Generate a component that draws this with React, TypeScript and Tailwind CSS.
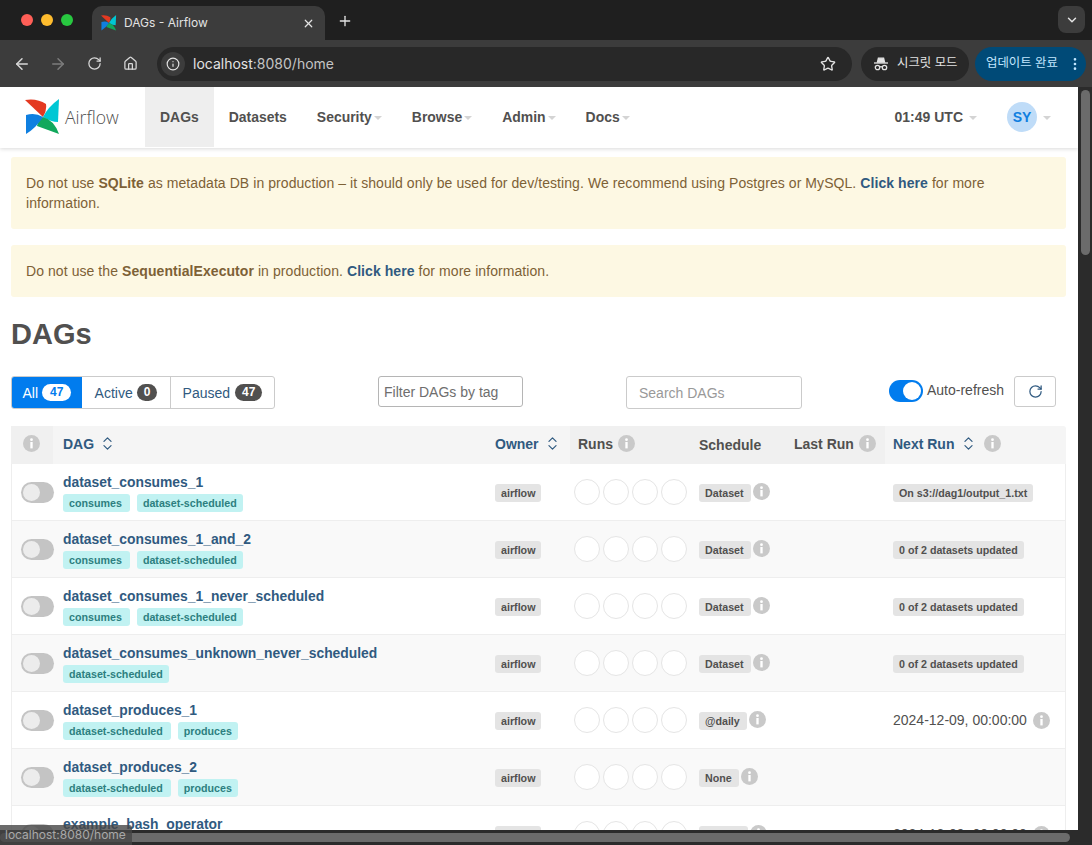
import { ArrowLeft, ArrowRight, ChevronDown, ChevronsUpDown, EllipsisVertical, Home, Info, Plus, RotateCw, Star, X } from "lucide-react";

const columns = "grid grid-cols-[42px_432px_85px_120px_95px_100px_1fr]";

const rows = [
  { name: "dataset_consumes_1", tags: ["consumes", "dataset-scheduled"], schedule: "Dataset", next: "On s3://dag1/output_1.txt" },
  { name: "dataset_consumes_1_and_2", tags: ["consumes", "dataset-scheduled"], schedule: "Dataset", next: "0 of 2 datasets updated" },
  { name: "dataset_consumes_1_never_scheduled", tags: ["consumes", "dataset-scheduled"], schedule: "Dataset", next: "0 of 2 datasets updated" },
  { name: "dataset_consumes_unknown_never_scheduled", tags: ["dataset-scheduled"], schedule: "Dataset", next: "0 of 2 datasets updated" },
  { name: "dataset_produces_1", tags: ["dataset-scheduled", "produces"], schedule: "@daily", date: "2024-12-09, 00:00:00" },
  { name: "dataset_produces_2", tags: ["dataset-scheduled", "produces"], schedule: "None" },
  { name: "example_bash_operator", tags: [], schedule: "0 0 * * *", date: "2024-12-09, 00:00:00" },
];

function Pinwheel({ className }: { className: string }) {
  return (
    <svg viewBox="0 0 36 36" className={className}>
      <path d="M0 1 Q12 -1 21 5 Q22 12 18 18 Z" fill="#e43921" />
      <path d="M34 0 L33 23 Q26 23 18 18 Q23 8 34 0 Z" fill="#00c7d4" />
      <path d="M34 35 L12 27 Q13 21 18 18 Q29 21 34 35 Z" fill="#11a85c" />
      <path d="M1 35 L1 16 Q10 13 18 18 Q11 29 1 35 Z" fill="#0f7fe0" />
    </svg>
  );
}

function InfoDot({ className = "" }: { className?: string }) {
  return (
    <svg viewBox="0 0 16 16" className={`h-[17px] w-[17px] shrink-0 ${className}`}>
      <circle cx="8" cy="8" r="8" fill="#c9c9c9" />
      <circle cx="8" cy="4.4" r="1.3" fill="#fff" />
      <rect x="6.9" y="6.6" width="2.2" height="6" fill="#fff" />
    </svg>
  );
}

function Caret({ className = "" }: { className?: string }) {
  return <span className={`inline-block h-0 w-0 border-x-[4px] border-t-[4px] border-x-transparent border-t-[#d4d4d4] ${className}`} />;
}

function Incognito() {
  return (
    <svg viewBox="0 0 16 16" className="h-[16px] w-[16px]" fill="none" stroke="#e3e3e3" strokeWidth="1.3">
      <path d="M4.5 6 L5.4 2.2 H10.6 L11.5 6 Z" fill="#e3e3e3" />
      <path d="M1 7 H15" />
      <circle cx="4.5" cy="11.5" r="2.2" />
      <circle cx="11.5" cy="11.5" r="2.2" />
      <path d="M6.7 11 Q8 10.2 9.3 11" />
    </svg>
  );
}

function NavItem({ label, caret, active }: { label: string; caret?: boolean; active?: boolean }) {
  return (
    <div className={`flex h-[60px] items-center px-[15px] text-[13.95px] font-bold text-[#51504f] ${active ? "bg-[#eeeeee]" : ""}`}>
      {label}
      {caret && <Caret className="ml-[2px] mt-[2px]" />}
    </div>
  );
}

function Badge({ text, className = "" }: { text: string; className?: string }) {
  return <span className={`inline-block h-[18px] rounded-[3px] bg-[#e4e4e4] pl-[6px] text-[10.7px] font-bold leading-[18px] text-[#51504f] ${className}`}>{text}</span>;
}

function DagRow({ row, index }: { row: (typeof rows)[number]; index: number }) {
  return (
    <div className={`${columns} h-[57px] border-b border-x border-[#eeeeee] ${index % 2 === 1 ? "bg-[#f9f9f9]" : "bg-white"}`}>
      <div className="flex items-center pl-[9px]">
        <div className="flex h-[21px] w-[35px] items-center rounded-full bg-[#c4c4c4] pl-[2px]">
          <div className="h-[17px] w-[17px] rounded-full bg-[#ececec]" />
        </div>
      </div>
      <div className="pl-[9px] pt-[10px]">
        <div className="text-[13.87px] font-bold leading-[17px] text-[#305a80]">{row.name}</div>
        <div className="mt-[3px] flex gap-[6.5px]">
          {row.tags.map((tag, i) => (
            <span key={tag} className={`h-[18px] rounded-[3px] bg-[#c1f2f2] pl-[6px] text-[10.7px] font-bold leading-[18px] text-[#2d7f80] ${i < row.tags.length - 1 ? "pr-[8.5px]" : "pr-[6px]"}`}>
              {tag}
            </span>
          ))}
        </div>
      </div>
      <div className="flex items-center pl-[9px] pt-[2px]">
        <Badge text="airflow" className="pr-[6px]" />
      </div>
      <div className="flex items-center gap-[3px] pl-[3px]">
        {[0, 1, 2, 3].map((i) => (
          <div key={i} className="h-[26px] w-[26px] rounded-full border border-[#e5e5e5] bg-white" />
        ))}
      </div>
      <div className="flex items-center pl-[8px] pt-[2px]">
        <Badge text={row.schedule} className="pr-[7px]" />
        <InfoDot className="-mt-[3px] ml-[2px]" />
      </div>
      <div />
      <div className="flex items-center pl-[7px] pt-[2px]">
        {row.next && <Badge text={row.next} className="pr-[6px]" />}
        {row.date && (
          <>
            <span className="-mt-[2px] text-[14px] text-[#51504f]">{row.date}</span>
            <InfoDot className="-mt-[2px] ml-[6px]" />
          </>
        )}
      </div>
    </div>
  );
}

function BrowserBar() {
  return (
    <div className="shrink-0 font-['Inter','Noto_Sans_CJK_KR',sans-serif] text-[#e3e3e3]">
      <div className="flex h-[40px] items-end bg-[#1f1f1f]">
        <div className="flex h-[40px] w-[92px] items-center gap-[8px] pl-[21px]">
          <span className="h-[12px] w-[12px] rounded-full bg-[#ff5f57]" />
          <span className="h-[12px] w-[12px] rounded-full bg-[#febc2e]" />
          <span className="h-[12px] w-[12px] rounded-full bg-[#28c840]" />
        </div>
        <div className="flex h-[34px] w-[233px] items-center rounded-t-[10px] bg-[#3c3c3c] pl-[9px] pr-[10px]">
          <Pinwheel className="h-[16px] w-[16px]" />
          <span className="ml-[7px] flex-1 text-[12px]">DAGs - Airflow</span>
          <X size={13} strokeWidth={2.2} />
        </div>
        <div className="flex h-[40px] w-[40px] items-center justify-center pt-[1px]">
          <Plus size={16} strokeWidth={2} />
        </div>
        <div className="flex-1" />
        <div className="mb-[7px] mr-[7px] flex h-[27px] w-[27px] items-center justify-center rounded-[8px] bg-[#3c3c3c]">
          <ChevronDown size={14} strokeWidth={2.5} />
        </div>
      </div>
      <div className="flex h-[47px] items-center bg-[#3c3c3c] pl-[13px] pr-[6px]">
        <ArrowLeft size={18} className="text-[#d8d8d8]" />
        <ArrowRight size={18} className="ml-[18px] text-[#7c7c7c]" />
        <RotateCw size={15} className="ml-[20px] text-[#d8d8d8]" />
        <Home size={15} className="ml-[21px] text-[#d8d8d8]" />
        <div className="ml-[19px] flex h-[34px] w-[695px] items-center rounded-full bg-[#282828] pl-[4px] pr-[16px]">
          <div className="flex h-[24px] w-[24px] items-center justify-center rounded-full bg-[#3c3c3c]">
            <Info size={14} />
          </div>
          <span className="ml-[8px] flex-1 text-[14px]">
            localhost<span className="text-[#c4c4c4]">:8080/home</span>
          </span>
          <Star size={16} />
        </div>
        <div className="ml-[9px] flex h-[34px] w-[108px] items-center gap-[8px] rounded-full bg-[#282828] pl-[12px] text-[12.4px]">
          <Incognito />
          시크릿 모드
        </div>
        <div className="ml-[6px] flex h-[34px] w-[111px] items-center justify-between rounded-full bg-[#004a77] pl-[11px] pr-[3px] text-[12.4px] text-[#c2e7ff]">
          업데이트 완료
          <EllipsisVertical size={16} />
        </div>
      </div>
    </div>
  );
}

export default function App() {
  return (
    <div className="flex h-[845px] w-[1092px] flex-col overflow-hidden bg-[#2b2b2b] font-['Liberation_Sans',Arial,sans-serif]">
      <BrowserBar />
      <div className="relative flex min-h-0 flex-1">
        <div className="min-w-0 flex-1 overflow-hidden bg-white pb-[15px]">
          {/* Nav */}
          <div className="flex h-[61px] items-start bg-white pl-[25px] shadow-[0_1px_4px_rgba(0,0,0,0.15)]">
            <div className="flex h-[60px] w-[120px] items-center">
              <Pinwheel className="h-[36px] w-[36px]" />
              <span className="ml-[4px] font-['Open_Sans',sans-serif] text-[17.6px] font-light text-[#51504f]">Airflow</span>
            </div>
            <NavItem label="DAGs" active />
            <NavItem label="Datasets" />
            <NavItem label="Security" caret />
            <NavItem label="Browse" caret />
            <NavItem label="Admin" caret />
            <NavItem label="Docs" caret />
            <div className="flex-1" />
            <div className="flex h-[60px] items-center text-[14px] font-bold text-[#51504f]">
              01:49 UTC
              <Caret className="ml-[6px] mt-[2px]" />
            </div>
            <div className="ml-[30px] mr-[27px] flex h-[60px] items-center">
              <div className="flex h-[30px] w-[30px] items-center justify-center rounded-full bg-[#bfdcf8] text-[14px] font-bold text-[#0f7fe0]">SY</div>
              <Caret className="ml-[6px] mt-[2px]" />
            </div>
          </div>

          <div className="pl-[11px] pr-[12px] text-[14px] leading-[20px] text-[#7d6136]">
            <div className="mt-[9px] h-[72px] rounded-[3px] bg-[#fdf8e3] px-[15px] pt-[16px] tracking-[0.07px]">
              Do not use <b>SQLite</b> as metadata DB in production – it should only be used for dev/testing. We recommend using Postgres or MySQL. <b className="text-[#305a80]">Click here</b> for more information.
            </div>
            <div className="mt-[16px] h-[52px] rounded-[3px] bg-[#fdf8e3] px-[15px] pt-[16px] tracking-[0.07px]">
              Do not use the <b>SequentialExecutor</b> in production. <b className="text-[#305a80]">Click here</b> for more information.
            </div>

            <h1 className="flex h-[79px] items-center pb-[5px] text-[29px] font-bold text-[#51504f]">DAGs</h1>

            {/* Filters */}
            <div className="flex h-[33px] items-start text-[#51504f]">
              <div className="flex h-[33px] w-[264px] overflow-hidden rounded-[3px] border border-[#cbcbcb] text-[14px] text-[#305a80]">
                <div className="flex w-[70px] items-center justify-center gap-[4px] bg-[#017cee] text-white">
                  All
                  <span className="rounded-full bg-white px-[8px] text-[12px] font-bold leading-[17px] text-[#017cee]">47</span>
                </div>
                <div className="flex w-[89px] items-center justify-center gap-[4px] border-r border-[#cbcbcb]">
                  Active
                  <span className="rounded-full bg-[#51504f] px-[7px] text-[12px] font-bold leading-[17px] text-white">0</span>
                </div>
                <div className="flex flex-1 items-center justify-center gap-[5px]">
                  Paused
                  <span className="rounded-full bg-[#51504f] px-[7px] text-[12px] font-bold leading-[17px] text-white">47</span>
                </div>
              </div>
              <div className="ml-[103px] flex h-[31px] w-[145px] items-center rounded-[3px] border border-[#b5b5b5] pl-[5px] text-[14px] text-[#6e6e6e]">Filter DAGs by tag</div>
              <div className="ml-[103px] flex h-[33px] w-[176px] items-center rounded-[3px] border border-[#cbcbcb] pl-[12px] text-[14px] text-[#999999]">Search DAGs</div>
              <div className="ml-[87px] mt-[4px] flex h-[22px] w-[34px] items-center justify-end rounded-full bg-[#017cee] pr-[2px]">
                <div className="h-[18px] w-[18px] rounded-full bg-white" />
              </div>
              <span className="ml-[4px] mt-[4px] text-[14px]">Auto-refresh</span>
              <div className="ml-[10px] flex h-[31px] w-[42px] items-center justify-center rounded-[3px] border border-[#cbcbcb] text-[#305a80]">
                <RotateCw size={15} strokeWidth={2} />
              </div>
            </div>

            {/* Table */}
            <div className="mt-[17px]">
              <div className={`${columns} h-[38px] rounded-t-[3px] bg-[#f5f5f5] text-[14px] font-bold text-[#51504f]`}>
                <div className="flex items-center justify-center bg-[#f0f0f0] pb-[3px] pr-[2px]">
                  <InfoDot />
                </div>
                <div className="flex items-center gap-[5px] pb-[3px] pl-[10px] text-[#305a80]">
                  DAG
                  <ChevronsUpDown size={17} strokeWidth={1.7} />
                </div>
                <div className="flex items-center gap-[5px] pb-[3px] pl-[10px] text-[#305a80]">
                  Owner
                  <ChevronsUpDown size={17} strokeWidth={1.7} />
                </div>
                <div className="flex items-center gap-[5px] bg-[#f0f0f0] pb-[3px] pl-[8px]">
                  Runs
                  <InfoDot />
                </div>
                <div className="flex items-center bg-[#f0f0f0] pb-[1px] pl-[9px]">Schedule</div>
                <div className="flex items-center gap-[5px] bg-[#f0f0f0] pb-[3px] pl-[9px]">
                  Last Run
                  <InfoDot />
                </div>
                <div className="flex items-center pb-[3px] pl-[8px] text-[#305a80]">
                  Next Run
                  <ChevronsUpDown size={17} strokeWidth={1.7} className="ml-[6px]" />
                  <InfoDot className="ml-[7px]" />
                </div>
              </div>
              {rows.map((row, index) => (
                <DagRow key={row.name} row={row} index={index} />
              ))}
            </div>
          </div>
        </div>

        {/* Scrollbars */}
        <div className="w-[14px] shrink-0 bg-[#2b2b2b] pl-[3px] pt-[3px]">
          <div className="h-[165px] w-[9px] rounded-full bg-[#6b6b6b]" />
        </div>
        <div className="absolute bottom-0 left-0 right-0 h-[15px] bg-[#2b2b2b] py-[3px] pr-[22px]">
          <div className="h-[9px] rounded-full bg-[#6b6b6b]" />
        </div>
        <div className="absolute bottom-0 left-0 h-[20px] w-[132px] rounded-tr-[3px] bg-[rgba(70,70,70,0.8)] pl-[5px] font-['Inter',sans-serif] text-[12px] leading-[20px] text-[#a8a8a8]">localhost:8080/home</div>
      </div>
    </div>
  );
}
